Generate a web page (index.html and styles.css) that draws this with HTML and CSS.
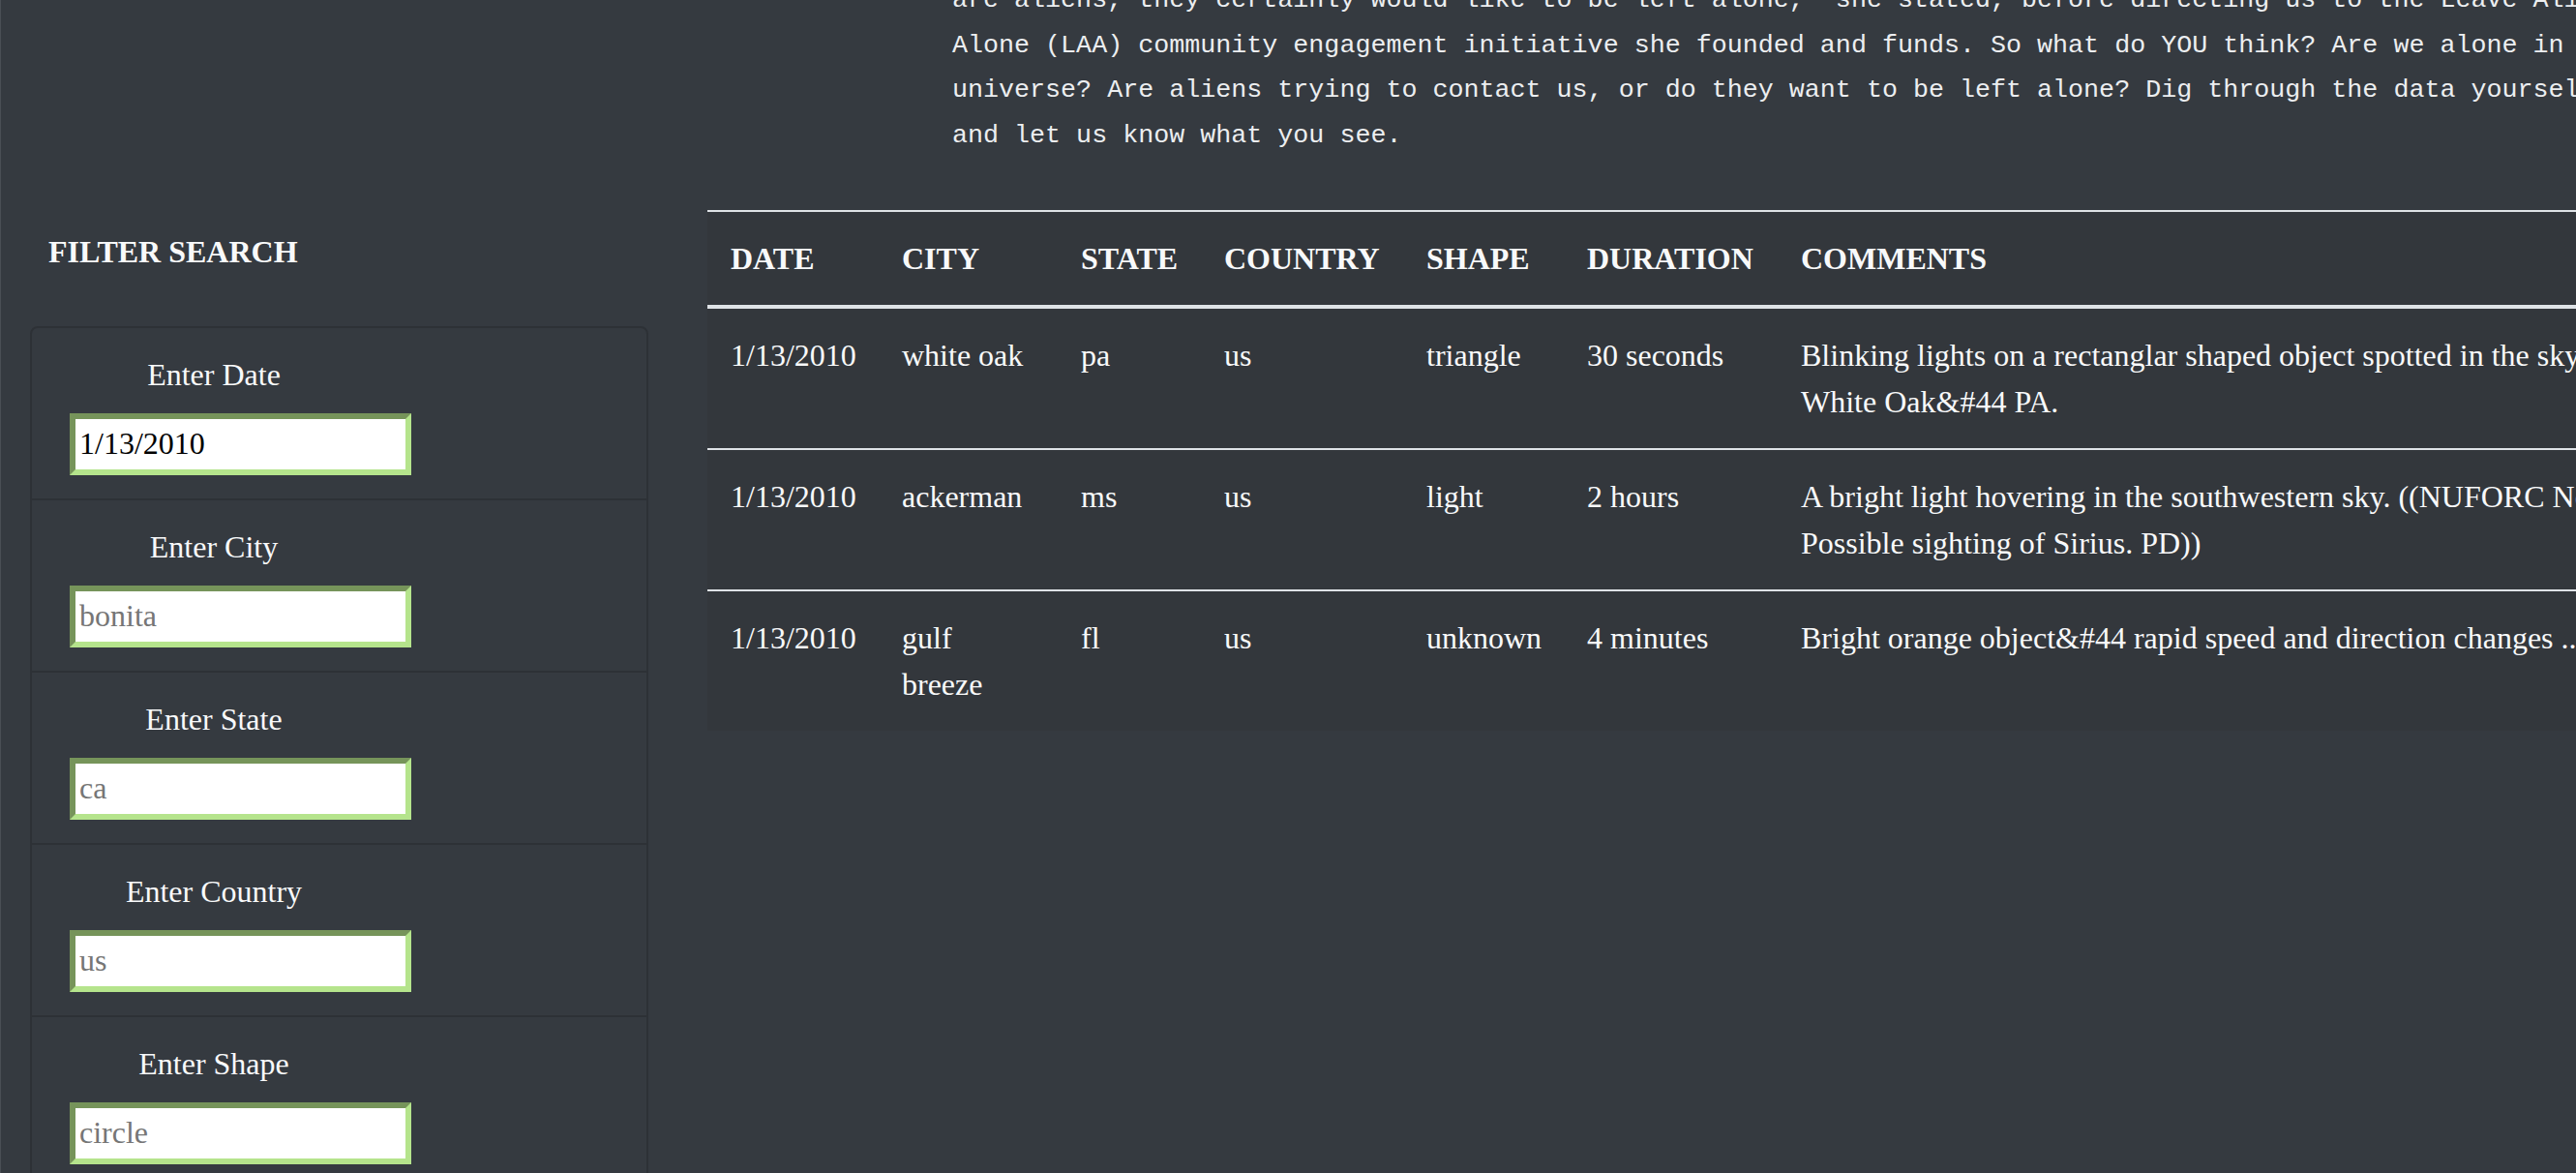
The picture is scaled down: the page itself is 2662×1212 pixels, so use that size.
FILE: index.html
```html
<!DOCTYPE html>
<html lang="en">
<head>
<meta charset="utf-8">
<title>UFO Sightings</title>
<link rel="stylesheet" href="styles.css">
</head>
<body>
<div class="page">
  <section class="intro">
    <p class="intro-text">are aliens, they certainly would like to be left alone," she stated, before directing us to the Leave Aliens Alone (LAA) community engagement initiative she founded and funds. So what do YOU think? Are we alone in the universe? Are aliens trying to contact us, or do they want to be left alone? Dig through the data yourself and let us know what you see.</p>
  </section>
  <div class="content">
    <aside class="sidebar">
      <h5 class="filter-title">FILTER SEARCH</h5>
      <ul class="filter-list">
        <li class="filter-item">
          <label class="filter-label" for="datetime">Enter Date</label>
          <input class="filter-input" id="datetime" type="text" value="1/13/2010">
        </li>
        <li class="filter-item">
          <label class="filter-label" for="city">Enter City</label>
          <input class="filter-input" id="city" type="text" placeholder="bonita">
        </li>
        <li class="filter-item">
          <label class="filter-label" for="state">Enter State</label>
          <input class="filter-input" id="state" type="text" placeholder="ca">
        </li>
        <li class="filter-item">
          <label class="filter-label" for="country">Enter Country</label>
          <input class="filter-input" id="country" type="text" placeholder="us">
        </li>
        <li class="filter-item">
          <label class="filter-label" for="shape">Enter Shape</label>
          <input class="filter-input" id="shape" type="text" placeholder="circle">
        </li>
      </ul>
    </aside>
    <main class="results">
      <table class="ufo-table">
        <colgroup>
          <col class="col-date">
          <col class="col-city">
          <col class="col-state">
          <col class="col-country">
          <col class="col-shape">
          <col class="col-duration">
          <col class="col-comments">
        </colgroup>
        <thead>
          <tr>
            <th>Date</th>
            <th>City</th>
            <th>State</th>
            <th>Country</th>
            <th>Shape</th>
            <th>Duration</th>
            <th>Comments</th>
          </tr>
        </thead>
        <tbody>
          <tr>
            <td>1/13/2010</td>
            <td>white oak</td>
            <td>pa</td>
            <td>us</td>
            <td>triangle</td>
            <td>30 seconds</td>
            <td>Blinking lights on a rectanglar shaped object spotted in the sky over White Oak&amp;#44 PA.</td>
          </tr>
          <tr>
            <td>1/13/2010</td>
            <td>ackerman</td>
            <td>ms</td>
            <td>us</td>
            <td>light</td>
            <td>2 hours</td>
            <td>A bright light hovering in the southwestern sky. ((NUFORC Note: Possible sighting of Sirius. PD))</td>
          </tr>
          <tr>
            <td>1/13/2010</td>
            <td>gulf breeze</td>
            <td>fl</td>
            <td>us</td>
            <td>unknown</td>
            <td>4 minutes</td>
            <td>Bright orange object&amp;#44 rapid speed and direction changes ...</td>
          </tr>
        </tbody>
      </table>
    </main>
  </div>
</div>
</body>
</html>
```
FILE: styles.css
```css
html, body {
  margin: 0;
  padding: 0;
  background: #353a40;
  overflow: hidden;
}

body {
  font-family: "Liberation Serif", "Times New Roman", serif;
  color: #f8f9fa;
}

.page {
  width: 2760px;
  min-height: 1212px;
  border-left: 1px solid #4a4f55;
}

.intro {
  padding-left: 983px;
}

.intro-text {
  width: 1730px;
  margin: -23px 0 0;
  font-family: "Liberation Mono", "Courier New", monospace;
  font-size: 26.7px;
  line-height: 46.7px;
  color: #eceef0;
}

.content {
  display: grid;
  grid-template-columns: 730px 1fr;
  margin-top: 53px;
}

.sidebar {
  padding: 25px 0 0 30px;
}

.filter-title {
  margin: 0 0 58px 19px;
  font-size: 32px;
  line-height: 37px;
  font-weight: bold;
  color: #f8f9fa;
}

.filter-list {
  list-style: none;
  margin: 0;
  padding: 0;
  width: 639px;
  border: 2px solid #2d3136;
  border-radius: 8px;
  box-sizing: border-box;
}

.filter-item {
  padding: 24px 0 24px 39px;
  border-top: 2px solid #2d3136;
}

.filter-item:first-child {
  border-top: none;
}

.filter-label {
  display: block;
  width: 298px;
  height: 48px;
  line-height: 48px;
  margin-bottom: 16px;
  text-align: center;
  font-size: 32px;
  color: #f8f9fa;
}

.filter-input {
  display: block;
  box-sizing: border-box;
  width: 353px;
  height: 64px;
  padding: 0 4px;
  margin: 0;
  border-style: solid;
  border-width: 6px;
  border-color: #76945a #b5e48c #b5e48c #76945a;
  background: #ffffff;
  font-family: "Liberation Serif", "Times New Roman", serif;
  font-size: 32px;
  color: #000000;
  outline: none;
}

.filter-input::placeholder {
  color: #767676;
}

.results {
  min-width: 0;
}

.ufo-table {
  width: 2030px;
  table-layout: fixed;
  border-collapse: collapse;
  background: #33373c;
  font-size: 32px;
  line-height: 48px;
  color: #f8f9fa;
}

.col-date { width: 177px; }
.col-city { width: 185px; }
.col-state { width: 148px; }
.col-country { width: 209px; }
.col-shape { width: 166px; }
.col-duration { width: 221px; }
.col-comments { width: 924px; }

.ufo-table th {
  padding: 24px;
  text-align: left;
  vertical-align: top;
  font-weight: bold;
  text-transform: uppercase;
  border-top: 2px solid #dee2e6;
  border-bottom: 4px solid #dee2e6;
}

.ufo-table td {
  padding: 24px;
  vertical-align: top;
  border-top: 2px solid #dee2e6;
}

.ufo-table tbody tr:first-child td {
  border-top: none;
}
```
